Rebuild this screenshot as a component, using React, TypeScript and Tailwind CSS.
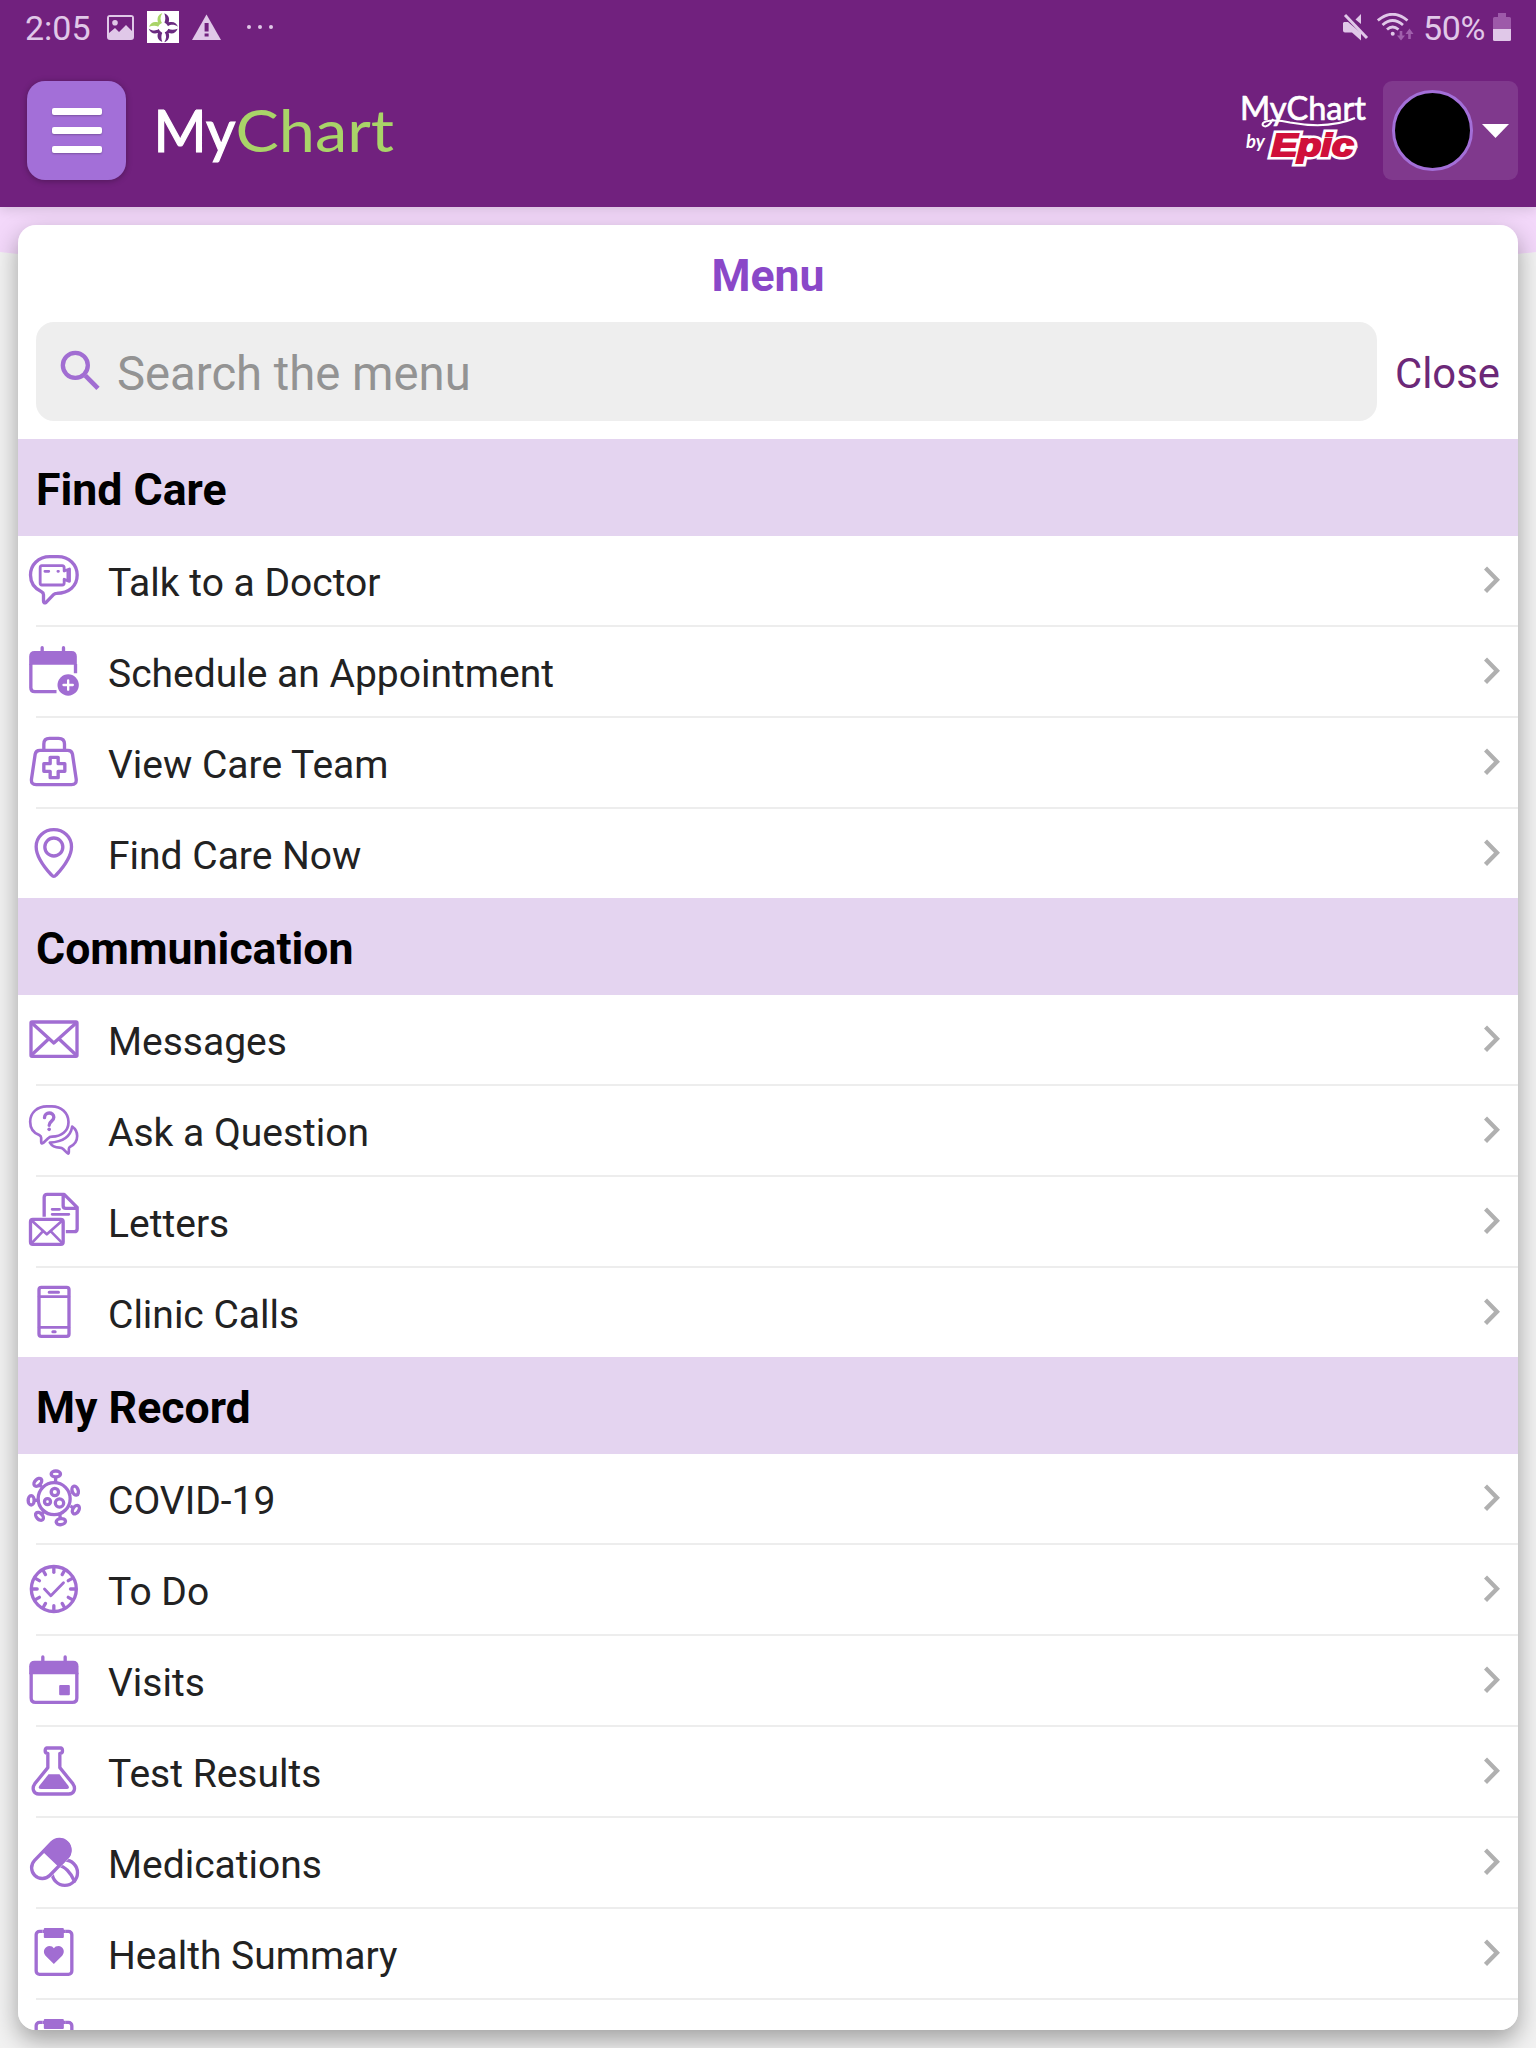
import type { ReactNode } from 'react';

const PURPLE = '#a16dd2';

/* Every menu glyph lives in a 180-unit window that is shown at 60px. */
function Glyph({ y, children }: { y: number; children: ReactNode }) {
  return (
    <svg
      className="mb-[2px] h-[60px] w-[60px] shrink-0"
      viewBox={`72.5 ${y} 180 180`}
      fill="none"
      stroke={PURPLE}
      strokeWidth="10"
      strokeLinecap="round"
      strokeLinejoin="round"
    >
      {children}
    </svg>
  );
}

const TalkIcon = () => (
  <Glyph y={30}>
    <path d="M150 50H174C208 50 232 74 232 105C232 138 208 159 170 160C166 160 164 161 161 164L138 188Q131 190 131 183V164Q131 158 125 155C103 145 92 127 92 105C92 74 116 50 150 50Z" />
    <path d="M126 77H187Q193 77 193 84V93L209 87V124L193 118V129Q193 135 187 135H126Q121 135 121 129V84Q121 77 126 77Z" strokeWidth="8.500" />
    <path d="M135 94H147M174 94H176" strokeWidth="8" />
    <path d="M203 94V118" strokeWidth="6" />
  </Glyph>
);

const ScheduleIcon = () => (
  <Glyph y={303}>
    <path d="M93 372V443Q93 455 105 455H170M227 372V400" strokeLinecap="butt" strokeWidth="10" />
    <path d="M88 374V350Q88 333 104 333H215Q231 333 231 350V374Z" fill={PURPLE} stroke="none" />
    <path d="M127 323V340M191 323V340" />
    <circle cx="205" cy="435" r="32" fill={PURPLE} stroke="none" />
    <path d="M205 421V449M191 435H219" stroke="#fff" strokeWidth="7" />
  </Glyph>
);

const CareTeamIcon = () => (
  <Glyph y={576}>
    <path d="M120 631H204Q216 631 218 643L229 717Q231 734 215 734H109Q93 734 95 717L106 643Q108 631 120 631Z" />
    <path d="M132 630V612Q132 595 149 595H176Q194 595 194 612V630" />
    <path d="M151 652H175V671H195V694H175V713H151V694H132V671H151Z" />
  </Glyph>
);

const PinIcon = () => (
  <Glyph y={849}>
    <path d="M162 869C191 869 215 890 215 920C215 950 193 979 169 1005Q162 1013 155 1005C131 979 109 950 109 920C109 890 133 869 162 869Z" />
    <circle cx="162" cy="921" r="27" />
  </Glyph>
);

const MessagesIcon = () => (
  <Glyph y={357}>
    <rect x="93.500" y="396" width="138" height="103" rx="3" />
    <path d="M97 400L162 459L228 400M96 494L147 446M228 494L177 446" strokeLinecap="butt" />
  </Glyph>
);

const QuestionIcon = () => (
  <Glyph y={630}>
    <path
      d="M141 649H156C184 649 206 668 206 696C206 724 184 740 157 740Q149 740 145 745L130 759Q124 763 124 755V743Q124 738 118 735C100 728 91 714 91 695C91 668 113 649 141 649Z"
      strokeWidth="8"
    />
    <path
      d="M150 758C186 756 212 742 217 710C226 716 232 727 232 738C232 754 222 765 211 770Q207 772 207 777V787Q207 794 201 788L190 777Q186 773 179 773C166 773 156 768 150 758Z"
      strokeWidth="8"
    />
    <path d="M134 683C134 664 162 665 162 682C162 694 148 693 148 706" />
    <circle cx="148" cy="718" r="5.500" fill={PURPLE} stroke="none" />
  </Glyph>
);

const LettersIcon = () => (
  <Glyph y={903}>
    <path d="M133 980V922Q133 913 142 913H193L232 952V1016Q232 1025 223 1025H198M190 914V947Q190 955 198 955H230" strokeLinecap="butt" />
    <path d="M157 958H179M157 973H207" strokeWidth="8.500" />
    <rect x="92" y="988" width="98" height="75" rx="7" />
    <path d="M97 993L141 1033L186 993M97 1058L129 1024M186 1058L153 1024" strokeWidth="8" />
  </Glyph>
);

const PhoneIcon = () => (
  <Glyph y={1176}>
    <rect x="117.500" y="1192" width="90" height="147" rx="7" />
    <path d="M118 1220H207M118 1312H207" strokeWidth="8.500" />
    <path d="M148 1207H176M159 1325H166" strokeWidth="9" />
  </Glyph>
);

/* Spikes of the virus: centre, rotation and the point where the stalk meets the body. */
const spikes = [
  [168, 372, 0, 167, 396],
  [226, 422, 70, 213, 427],
  [228, 479, -58, 212, 468],
  [183, 515, -8, 180, 494],
  [119, 499, 45, 132, 485],
  [94, 451, 90, 114, 451],
  [114, 397, -45, 125, 411],
];

const CovidIcon = () => (
  <Glyph y={354}>
    <circle cx="163" cy="446" r="48" />
    <circle cx="165" cy="426" r="11" />
    <circle cx="143" cy="455" r="9" />
    <circle cx="179" cy="459" r="12.500" />
    {spikes.map(([x, y, r, sx, sy]) => (
      <g key={`${x}-${y}`}>
        <path d={`M${x + (sx - x) * 0.5} ${y + (sy - y) * 0.5}L${sx} ${sy}`} strokeLinecap="butt" />
        <ellipse cx={x} cy={y} rx="14" ry="9" transform={`rotate(${r} ${x} ${y})`} fill="#fff" />
      </g>
    ))}
  </Glyph>
);

const TodoIcon = () => (
  <Glyph y={627}>
    <circle cx="162" cy="717" r="67.500" />
    {[0, 30, 60, 90, 120, 150, 180, 210, 240, 270, 300, 330].map((a) => (
      <path key={a} d="M162 653V667" transform={`rotate(${a} 162 717)`} />
    ))}
    <path d="M134 717L153 737L191 698" strokeWidth="8.500" />
  </Glyph>
);

const VisitsIcon = () => (
  <Glyph y={900}>
    <path d="M94 968V1044Q94 1057 107 1057H218Q231 1057 231 1044V968" strokeLinecap="butt" strokeWidth="10" />
    <path d="M88 973V949Q88 932 104 932H220Q236 932 236 949V973Z" fill={PURPLE} stroke="none" />
    <path d="M129 921V938M196 921V938" strokeWidth="10" />
    <rect x="178" y="1005" width="32" height="31" rx="3" fill={PURPLE} stroke="none" />
  </Glyph>
);

const FlaskIcon = () => (
  <Glyph y={122}>
    <path d="M141 143H183Q188 144 188 152Q188 159 180 159V202L219 250C229 264 223 281 207 281H117C101 281 95 264 105 250L144 202V159Q136 159 136 152Q136 144 141 143Z" />
    <path d="M146 222H179L206 257Q210 266 200 266H124Q114 266 118 257Z" fill={PURPLE} stroke="none" />
  </Glyph>
);

const PillsIcon = () => (
  <Glyph y={396}>
    <circle cx="195" cy="518" r="38" />
    <path d="M172 497C194 495 214 520 224 544" />
    <g transform="rotate(-46 153 477)">
      <rect x="80" y="441" width="146" height="72" rx="36" fill="#fff" stroke="#fff" strokeWidth="4" />
      <rect x="84" y="445" width="138" height="64" rx="32" fill="#fff" />
      <path d="M152 441H190A36 36 0 0 1 190 513H152Z" fill={PURPLE} stroke="none" />
    </g>
  </Glyph>
);

const ClipboardIcon = () => (
  <Glyph y={669}>
    <rect x="109" y="694" width="107" height="129" rx="10" />
    <rect x="128" y="684" width="68" height="30" fill="#fff" stroke="none" />
    <path d="M128 694H196" strokeLinecap="butt" />
    <rect x="132" y="684" width="60" height="30" rx="3" fill={PURPLE} stroke="none" />
    <path d="M162 792L137 767C126 754 136 738 149 738Q158 738 162 745Q166 738 176 738C189 738 198 754 187 767Z" fill={PURPLE} stroke="none" />
  </Glyph>
);

const sections = [
  {
    title: 'Find Care',
    items: [
      ['Talk to a Doctor', TalkIcon],
      ['Schedule an Appointment', ScheduleIcon],
      ['View Care Team', CareTeamIcon],
      ['Find Care Now', PinIcon],
    ],
  },
  {
    title: 'Communication',
    items: [
      ['Messages', MessagesIcon],
      ['Ask a Question', QuestionIcon],
      ['Letters', LettersIcon],
      ['Clinic Calls', PhoneIcon],
    ],
  },
  {
    title: 'My Record',
    items: [
      ['COVID-19', CovidIcon],
      ['To Do', TodoIcon],
      ['Visits', VisitsIcon],
      ['Test Results', FlaskIcon],
      ['Medications', PillsIcon],
      ['Health Summary', ClipboardIcon],
      ['', ClipboardIcon],
    ],
  },
] as { title: string; items: [string, () => ReactNode][] }[];

function Row({ label, Icon }: { label: string; Icon: () => ReactNode }) {
  return (
    <li className="group h-[91px] shrink-0 last:h-[89px]">
      <button className="flex h-[89px] w-full items-center pr-[18px] pl-[6px] text-left">
        <Icon />
        <span className="flex-1 pt-[4px] pl-[24px] text-[39px] leading-[48px] text-[#222]">{label}</span>
        <svg className="mb-[1px] h-[28px] w-[16px]" viewBox="0 0 16 28" fill="none" stroke="#b0b0b0" strokeWidth="4.300">
          <path d="M1.500 2L13 13.700L1.500 25.400" />
        </svg>
      </button>
      <div className="ml-[18px] h-[2px] bg-[#ededed] group-last:hidden" />
    </li>
  );
}

function StatusBar() {
  return (
    <div className="flex h-[54px] items-center justify-between pr-[25px] pl-[25px] text-[34px] text-[#e0c8e8]">
      <div className="flex items-center">
        <span className="w-[82px] pt-[2px] leading-[40px]">2:05</span>
        <svg className="h-[27px] w-[27px]" viewBox="0 0 27 27">
          <path fill="#e0c8e8" fillRule="evenodd" d="M3 1H24Q27 1 27 4V23Q27 26 24 26H3Q0 26 0 23V4Q0 1 3 1ZM2 3V19L8 14L12 18L19 11L25 17V3ZM8 6A2.800 2.800 0 1 1 8 11.600A2.800 2.800 0 1 1 8 6Z" />
        </svg>
        <svg className="ml-[13px] h-[32px] w-[32px] bg-white" viewBox="0 0 96 96">
          {[0, 90, 180, 270].map((a) => (
            <path
              key={a}
              transform={`rotate(${a} 49 50)`}
              fill={a === 0 ? '#a9d468' : '#6a2a80'}
              d="M46 6C34 11 29 20 33 34C20 30 11 35 6 47C17 43 27 43 34 47C36 42 39 39 45 36C39 28 39 17 46 6Z"
            />
          ))}
          <path d="M49 34V66M33 50H65" stroke="#fff" strokeWidth="6" />
        </svg>
        <svg className="ml-[13px] h-[26px] w-[29px]" viewBox="0 0 29 26">
          <path d="M14.500 0.500L29 26H0Z" fill="#e0c8e8" />
          <path d="M12.600 9H16.600V17.500H12.600ZM12.600 19.500H16.600V22.500H12.600Z" fill="#71217e" />
        </svg>
        <span className="ml-[26px] flex gap-[7px]">
          <i className="h-[4px] w-[4px] rounded-full bg-[#e0c8e8]" />
          <i className="h-[4px] w-[4px] rounded-full bg-[#e0c8e8]" />
          <i className="h-[4px] w-[4px] rounded-full bg-[#e0c8e8]" />
        </span>
      </div>
      <div className="flex items-center">
        <svg className="h-[28px] w-[26px]" viewBox="0 0 26 28">
          <path d="M1 9H5L18 20V27.500L9 19.500H2Q0 19.500 0 17.500V10ZM12.500 6.500L18 1V11Z" fill="#e0c8e8" />
          <path d="M5 2L25 23" stroke="#71217e" strokeWidth="1.500" />
          <path d="M2 2L24 25" stroke="#e0c8e8" strokeWidth="3" />
        </svg>
        <svg className="ml-[8px] h-[28px] w-[37px]" viewBox="0 0 37 28" fill="none" stroke="#e0c8e8" strokeWidth="2.800">
          <path d="M0.800 7.500Q15.500 -5 30.500 7.500M5.500 12Q15.500 3 26 12M10 16.500Q15.500 11.500 21.500 16.500" />
          <circle cx="15.700" cy="20.800" r="2" fill="#e0c8e8" stroke="none" />
          <path d="M24 18V24M32.500 26V19" stroke="#a060ac" strokeWidth="2.600" />
          <path d="M20 22.500H28L24 27.500ZM28.500 21H36.500L32.500 15.500Z" fill="#a060ac" stroke="none" />
        </svg>
        <span className="ml-[9px] w-[61px] pt-[2px] leading-[40px] tracking-[-0.3px]">50%</span>
        <svg className="ml-[9px] h-[28px] w-[18px]" viewBox="0 0 18 28">
          <path d="M5 0H13V4H16.500Q18 4 18 5.500V16H0V5.500Q0 4 1.500 4H5Z" fill="#9d5aa9" />
          <path d="M0 16H18V26.500Q18 28 16.500 28H1.500Q0 28 0 26.500Z" fill="#e0c8e8" />
        </svg>
      </div>
    </div>
  );
}

function Header() {
  return (
    <header className="relative h-[207px] shrink-0 bg-[#71217e] shadow-[0_2px_12px_rgba(0,0,0,0.14)]">
      <StatusBar />
      <div className="mt-[27px] flex h-[99px] items-center pr-[18px] pl-[27px]">
        <button className="flex h-[99px] w-[99px] flex-col items-center justify-center gap-[12px] rounded-[18px] bg-[#a36fd8] shadow-[0_1px_6px_rgba(0,0,0,0.3)]">
          <span className="h-[7px] w-[50px] rounded-[2px] bg-white shadow-[0_1px_2px_rgba(0,0,0,0.25)]" />
          <span className="h-[7px] w-[50px] rounded-[2px] bg-white shadow-[0_1px_2px_rgba(0,0,0,0.25)]" />
          <span className="h-[7px] w-[50px] rounded-[2px] bg-white shadow-[0_1px_2px_rgba(0,0,0,0.25)]" />
        </button>
        <svg className="ml-[24px] h-[99px] w-[260px]" viewBox="150 81 260 99" fontFamily="Lato, sans-serif" fontSize="58">
          <text x="153.500" y="152" fill="#fff" stroke="#fff" strokeWidth="1.200" textLength="82" lengthAdjust="spacingAndGlyphs">My</text>
          <text x="235.500" y="152" fill="#a9d468" textLength="158.500" lengthAdjust="spacingAndGlyphs">Chart</text>
        </svg>
        <svg className="ml-auto h-[99px] w-[130px]" viewBox="1240 81 130 99">
          <text x="1240" y="120" fill="#fff" stroke="#fff" strokeWidth="0.700" fontFamily="Lato, sans-serif" fontSize="33" textLength="126" lengthAdjust="spacingAndGlyphs">MyChart</text>
          <path d="M1273 119C1270 125 1266 128 1263 125.500C1260 120.500 1275 119 1290 122.500C1315 127 1338 125.500 1355 118" fill="none" stroke="#fff" strokeWidth="2" />
          <text x="1246" y="147.500" fill="#fff" fontFamily="Lato, sans-serif" fontStyle="italic" fontWeight="700" fontSize="18.500">by</text>
          <text
            x="1271.500" y="155.500" fill="#d0103a" stroke="#fff" strokeWidth="7" paintOrder="stroke" strokeLinejoin="miter"
            fontFamily="Liberation Sans, sans-serif" fontStyle="italic" fontWeight="700" fontSize="32" textLength="82" lengthAdjust="spacingAndGlyphs"
          >
            Epic
          </text>
          <text
            x="1271.500" y="155.500" fill="#d0103a" stroke="#d0103a" strokeWidth="2"
            fontFamily="Liberation Sans, sans-serif" fontStyle="italic" fontWeight="700" fontSize="32" textLength="82" lengthAdjust="spacingAndGlyphs" aria-hidden="true"
          >
            Epic
          </text>
        </svg>
        <button className="ml-[13px] flex h-[99px] w-[135px] items-center rounded-[9px] bg-[#80398d] pl-[9px]">
          <span className="h-[81px] w-[81px] rounded-full border-[3px] border-[#a36fd8] bg-black" />
          <svg className="ml-[9px] h-[14px] w-[27px]" viewBox="0 0 27 14">
            <path d="M0 0H27L13.500 14Z" fill="#fff" />
          </svg>
        </button>
      </div>
    </header>
  );
}

export default function App() {
  return (
    <div className="relative flex h-[2048px] w-[1536px] flex-col overflow-hidden bg-[#f2f2f2] font-['Roboto',sans-serif]">
      <svg className="absolute top-[207px] left-0 h-[90px] w-[1536px]" viewBox="0 0 1536 90">
        <path d="M0 0H1536V45Q768 131 0 45Z" fill="#f3d8fa" />
      </svg>
      <Header />
      <main className="relative mx-[18px] mt-[18px] h-[1805px] shrink-0 rounded-[18px] shadow-[0_10px_24px_rgba(0,0,0,0.34)]">
        <div className="flex h-full flex-col overflow-hidden rounded-[18px] bg-white">
          <h1 className="h-[97px] shrink-0 pt-[25px] text-center text-[44.6px] leading-[53px] font-bold text-[#8a48c8]">Menu</h1>
          <div className="flex h-[117px] shrink-0 items-start pl-[18px]">
            <div className="flex h-[99px] w-[1341px] items-center rounded-[18px] bg-[#eee] pl-[24px]">
              <svg className="mb-[3px] h-[40px] w-[40px]" viewBox="180 390 120 120" fill="none" stroke={PURPLE}>
                <circle cx="226" cy="436" r="37.500" strokeWidth="13" />
                <path d="M256 467L294 505" strokeWidth="14" />
              </svg>
              <span className="pt-[5px] pl-[17px] text-[47.25px] leading-[56px] text-[#939393]">Search the menu</span>
            </div>
            <button className="ml-[18px] h-[99px] pt-[5px] text-[41.8px] leading-[50px] text-[#6c2878]">Close</button>
          </div>
          {sections.map((s) => (
            <section key={s.title} className="shrink-0">
              <h2 className="flex h-[97px] items-center bg-[#e4d4f0] pt-[6px] pl-[18px] text-[44.6px] leading-[53px] font-bold text-black">{s.title}</h2>
              <ul>
                {s.items.map(([label, Icon]) => (
                  <Row key={label} label={label} Icon={Icon} />
                ))}
              </ul>
            </section>
          ))}
        </div>
      </main>
    </div>
  );
}
